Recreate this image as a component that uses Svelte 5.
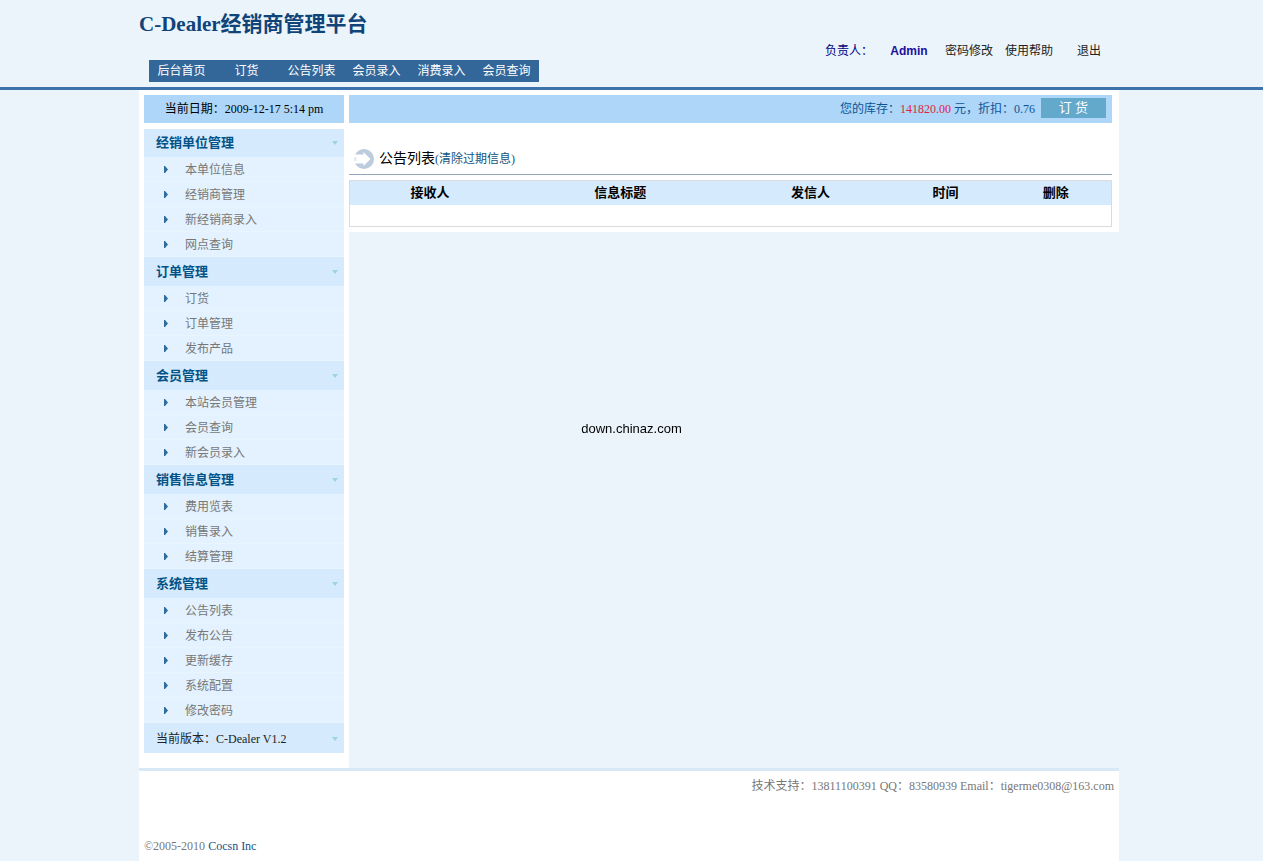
<script lang="ts">
    type Group = { title: string; items: string[]; open: boolean };

    const navLinks = ["后台首页", "订货", "公告列表", "会员录入", "消费录入", "会员查询"];
    const userLinks = ["密码修改", "使用帮助", "退出"];
    const columns = [
        { label: "接收人", name: "receiver" },
        { label: "信息标题", name: "subject" },
        { label: "发信人", name: "sender" },
        { label: "时间", name: "time" },
        { label: "删除", name: "remove" },
    ];

    let groups: Group[] = $state([
        { title: "经销单位管理", items: ["本单位信息", "经销商管理", "新经销商录入", "网点查询"], open: true },
        { title: "订单管理", items: ["订货", "订单管理", "发布产品"], open: true },
        { title: "会员管理", items: ["本站会员管理", "会员查询", "新会员录入"], open: true },
        { title: "销售信息管理", items: ["费用览表", "销售录入", "结算管理"], open: true },
        { title: "系统管理", items: ["公告列表", "发布公告", "更新缓存", "系统配置", "修改密码"], open: true },
    ]);
</script>

{#snippet caret()}
    <svg class="caret" viewBox="0 0 6 4" aria-hidden="true"><path d="M0 0h6L3 4z" /></svg>
{/snippet}

<header>
    <div class="wrap top">
        <div>
            <h1>C-Dealer经销商管理平台</h1>
            <nav>
                {#each navLinks as link}
                    <a href="#top">{link}</a>
                {/each}
            </nav>
        </div>
        <div class="user">
            <span class="owner">负责人：</span>
            <strong>Admin</strong>
            {#each userLinks as link}
                <a href="#top">{link}</a>
            {/each}
        </div>
    </div>
</header>

<div class="page">
    <div class="wrap columns">
        <aside>
            <div class="date">当前日期：2009-12-17 5:14 pm</div>
            {#each groups as group}
                <section>
                    <button class="group-title" onclick={() => (group.open = !group.open)}>
                        {group.title}
                        {@render caret()}
                    </button>
                    {#if group.open}
                        <ul>
                            {#each group.items as item}
                                <li>
                                    <svg class="arrow" viewBox="0 0 4 7" aria-hidden="true"><path d="M0 0h1l3 3.5L1 7H0z" /></svg>
                                    <a href="#top">{item}</a>
                                </li>
                            {/each}
                        </ul>
                    {/if}
                </section>
            {/each}
            <div class="version">
                当前版本：C-Dealer V1.2
                {@render caret()}
            </div>
        </aside>

        <main>
            <div class="stock">
                <span>您的库存：<em>141820.00</em> 元，折扣：0.76</span>
                <button class="order">订 货</button>
            </div>
            <h2>
                <svg class="icon" viewBox="0 0 20 20" aria-hidden="true">
                    <circle class="ring" cx="10" cy="10" r="10" />
                    <path class="inner" d="M0 5.500H9.500V3L16.500 10L9.500 17V14.500H0z" />
                    <path class="ring" d="M0 8H2.500V12H0z" opacity="0.4" />
                </svg>
                <span>公告列表<a href="#top">(清除过期信息)</a></span>
            </h2>
            <table>
                <thead>
                    <tr>
                        {#each columns as column}
                            <th class={column.name}>{column.label}</th>
                        {/each}
                    </tr>
                </thead>
                <tbody>
                    <tr><td colspan="5"></td></tr>
                </tbody>
            </table>
        </main>
    </div>

    <footer class="wrap">
        <p class="support">技术支持：13811100391 QQ：83580939 Email：tigerme0308@163.com</p>
        <p>©2005-2010 <a href="#top">Cocsn Inc</a></p>
    </footer>
</div>

<div class="watermark">down.chinaz.com</div>

<style>
    :global(body) {
        background: #ebf4fb;
        font: 12px/20px "Liberation Serif", "Noto Sans CJK SC", serif;
        color: #222;
    }

    h1,
    h2,
    p,
    ul {
        margin: 0;
        padding: 0;
    }

    a {
        color: inherit;
        text-decoration: none;
    }

    a:hover {
        text-decoration: underline;
    }

    button {
        border: 0;
        font: inherit;
        cursor: pointer;
    }

    header,
    .page {
        padding-right: 5px;
    }

    header {
        border-bottom: 3px solid #3d72ab;
    }

    .wrap {
        box-sizing: border-box;
        max-width: 980px;
        margin: 0 auto;
    }

    .top {
        display: flex;
        justify-content: space-between;
        align-items: flex-start;
        padding: 12px 0 5px;
    }

    h1 {
        font-size: 21px;
        line-height: 24px;
        color: #104478;
    }

    nav {
        display: flex;
        margin: 24px 0 0 10px;
        background: #336699;
        color: #fff;
        line-height: 22px;
    }

    nav a {
        width: 65px;
        text-align: center;
    }

    .user {
        display: flex;
        margin-top: 29px;
    }

    .user > * {
        width: 60px;
        text-align: center;
    }

    .user .owner {
        color: #000080;
    }

    .user strong {
        font-family: "Liberation Sans", sans-serif;
        color: #1a0f9c;
    }

    .columns {
        display: flex;
        align-items: flex-start;
    }

    aside {
        flex: none;
        width: 200px;
        padding: 5px 5px 15px;
        background: #fff;
    }

    .date {
        margin-bottom: 6px;
        background: #add6f9;
        color: #000;
        line-height: 28px;
        text-align: center;
    }

    .group-title,
    .version {
        display: flex;
        justify-content: space-between;
        align-items: center;
        box-sizing: border-box;
        width: 100%;
        height: 28px;
        padding: 0 6px 0 12px;
        background: #d5eafd;
    }

    .group-title {
        color: #035286;
        font-size: 13px;
        font-weight: bold;
    }

    .version {
        height: 29px;
    }

    .caret {
        width: 6px;
        height: 4px;
        fill: #9dd3e4;
    }

    ul {
        list-style: none;
        border-bottom: 1px solid #d5eafd;
    }

    li {
        display: flex;
        align-items: center;
        gap: 17px;
        height: 24px;
        padding-left: 20px;
        border-bottom: 1px solid #e9f5fc;
        background: #e3f2fe;
        color: #777;
        line-height: 26px;
    }

    li a {
        height: 24px;
    }

    .arrow {
        width: 4px;
        height: 7px;
        fill: #2e6c9e;
    }

    main {
        flex: 1;
        padding: 5px 7px 5px 0;
        background: #fff;
    }

    .stock {
        display: flex;
        justify-content: flex-end;
        gap: 6px;
        padding: 3px 6px 5px;
        background: #add6f9;
        color: #0d5492;
        line-height: 22px;
    }

    .stock span {
        height: 20px;
    }

    .stock em {
        color: #e0243c;
        font-style: normal;
    }

    .order {
        width: 65px;
        height: 20px;
        padding: 0;
        background: #62a9cc;
        color: #fff;
        font-size: 13px;
        line-height: 20px;
    }

    h2 {
        display: flex;
        align-items: center;
        gap: 5px;
        height: 31px;
        margin: 20px 0 5px;
        padding-left: 5px;
        border-bottom: 1px solid #8fa5b8;
        color: #000;
        font-size: 14px;
        font-weight: normal;
    }

    h2 a {
        color: #11557f;
        font-size: 12px;
    }

    .icon {
        width: 20px;
        height: 20px;
    }

    .ring {
        fill: #bccbdd;
    }

    .inner {
        fill: #fff;
    }

    table {
        width: 100%;
        border: 1px solid #d9dcde;
        border-spacing: 0;
        color: #000;
    }

    th {
        height: 24px;
        padding: 0;
        background: #d5eafd;
        font-size: 13px;
        line-height: 20px;
    }

    td {
        height: 21px;
        padding: 0;
    }

    .receiver,
    .sender {
        width: 21%;
    }

    .subject {
        width: 29%;
    }

    footer {
        padding: 5px;
        border-top: 3px solid #d7e9f7;
        background: #fff;
        color: #777;
    }

    footer a {
        color: #11558c;
    }

    .support {
        margin-bottom: 40px;
        text-align: right;
    }

    .watermark {
        position: fixed;
        inset: 0;
        display: grid;
        place-items: center;
        padding-bottom: 4px;
        color: #000;
        font-family: "Liberation Sans", sans-serif;
        font-size: 13px;
        pointer-events: none;
    }
</style>
